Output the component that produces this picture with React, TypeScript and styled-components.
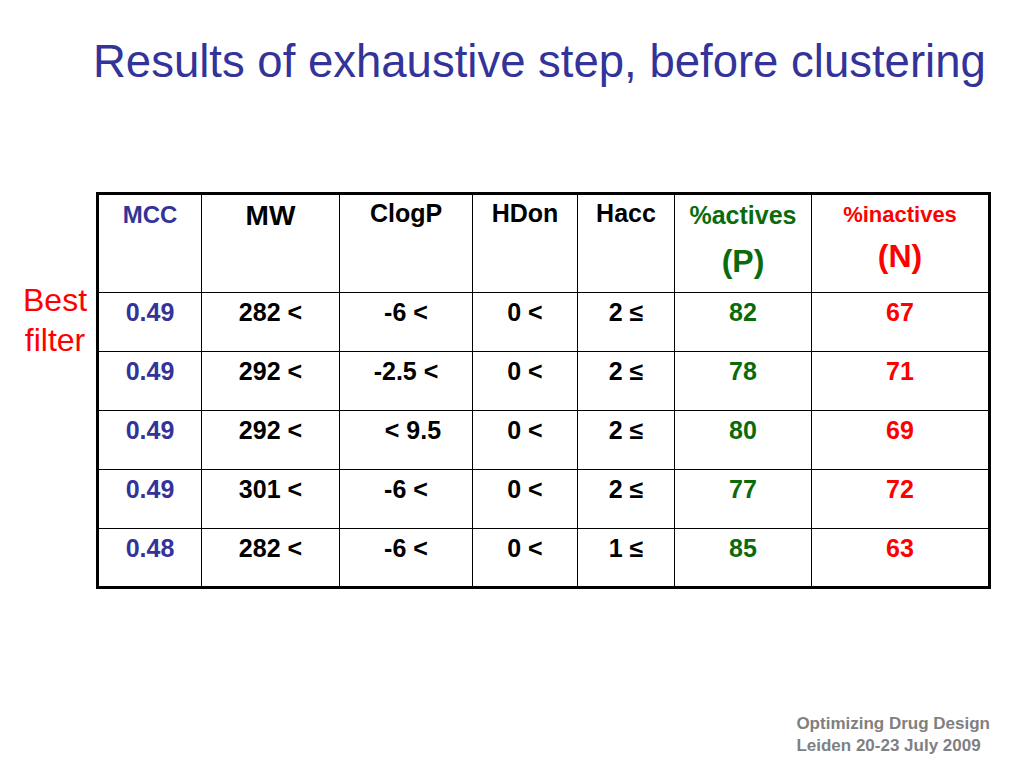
import React from 'react';
import styled, { createGlobalStyle } from 'styled-components';

const BLUE = '#333399';
const GREEN = '#0b6b0b';
const RED = '#ff0000';

const GlobalStyle = createGlobalStyle`
  html, body {
    margin: 0;
    padding: 0;
    background: #ffffff;
  }
  body {
    font-family: 'Liberation Sans', Arial, sans-serif;
  }
`;

const Slide = styled.div`
  width: 1024px;
  height: 768px;
  position: relative;
  background: #ffffff;
  display: flex;
  flex-direction: column;
  overflow: hidden;
`;

const Title = styled.h1`
  margin: 0;
  padding: 39px 0 0 93px;
  font-size: 45.5px;
  font-weight: normal;
  line-height: 45px;
  color: ${BLUE};
  white-space: nowrap;
`;

const Body = styled.div`
  display: flex;
  flex-direction: row;
  margin-top: 108px;
`;

const SideLabel = styled.div`
  width: 96px;
  padding-top: 88px;
  padding-left: 14px;
  box-sizing: border-box;
  text-align: center;
  color: ${RED};
  font-size: 32px;
  line-height: 40px;
`;

const Table = styled.table`
  width: 892px;
  border-collapse: collapse;
  border: 3px solid #000;
  table-layout: fixed;
  th,
  td {
    border: 1px solid #000;
    padding: 0;
    text-align: center;
    vertical-align: top;
    font-weight: bold;
  }
  th {
    height: 99px;
    padding-top: 8px;
    box-sizing: border-box;
  }
  td {
    height: 59px;
    padding-top: 7px;
    box-sizing: border-box;
    font-size: 25px;
    line-height: 25px;
    color: #000;
  }
`;

interface HeadTextProps {
  size: number;
  color?: string;
  lift?: number;
}

const HeadText = styled.div<HeadTextProps>`
  font-size: ${(props) => props.size}px;
  line-height: ${(props) => props.size}px;
  margin-top: ${(props) => props.lift || 0}px;
  color: ${(props) => props.color || '#000'};
`;

const HeadSub = styled.div<HeadTextProps>`
  font-size: ${(props) => props.size}px;
  line-height: ${(props) => props.size}px;
  margin-top: ${(props) => props.lift || 0}px;
  color: ${(props) => props.color || '#000'};
`;

interface CellProps {
  tone?: string;
}

const Cell = styled.td<CellProps>`
  && {
    color: ${(props) => props.tone || '#000'};
  }
`;

const Footer = styled.div`
  position: absolute;
  right: 34px;
  bottom: 11px;
  color: #808080;
  font-size: 17px;
  font-weight: bold;
  line-height: 22px;
`;

const cols = [104, 138, 133, 105, 97, 137, 178];

const rows = [
  ['0.49', '282 <', '-6 <', '0 <', '2 \u2264', '82', '67'],
  ['0.49', '292 <', '-2.5 <', '0 <', '2 \u2264', '78', '71'],
  ['0.49', '292 <', '\u00a0\u00a0< 9.5', '0 <', '2 \u2264', '80', '69'],
  ['0.49', '301 <', '-6 <', '0 <', '2 \u2264', '77', '72'],
  ['0.48', '282 <', '-6 <', '0 <', '1 \u2264', '85', '63'],
];

const tones = [BLUE, '#000', '#000', '#000', '#000', GREEN, RED];

export default function App() {
  return (
    <Slide>
      <GlobalStyle />
      <Title>Results of exhaustive step, before clustering</Title>
      <Body>
        <SideLabel>
          Best
          <br />
          filter
        </SideLabel>
        <Table>
          <colgroup>
            {cols.map((w, i) => (
              <col key={i} style={{ width: w }} />
            ))}
          </colgroup>
          <thead>
            <tr>
              <th>
                <HeadText size={24} color={BLUE} lift={0}>MCC</HeadText>
              </th>
              <th>
                <HeadText size={28} lift={-1}>MW</HeadText>
              </th>
              <th>
                <HeadText size={25} lift={-2}>ClogP</HeadText>
              </th>
              <th>
                <HeadText size={25} lift={-2}>HDon</HeadText>
              </th>
              <th>
                <HeadText size={25} lift={-2}>Hacc</HeadText>
              </th>
              <th>
                <HeadText size={25} color={GREEN} lift={0}>%actives</HeadText>
                <HeadSub size={32} color={GREEN} lift={17}>(P)</HeadSub>
              </th>
              <th>
                <HeadText size={22} color={RED} lift={1}>%inactives</HeadText>
                <HeadSub size={32} color={RED} lift={14}>(N)</HeadSub>
              </th>
            </tr>
          </thead>
          <tbody>
            {rows.map((r, i) => (
              <tr key={i}>
                {r.map((v, j) => (
                  <Cell key={j} tone={tones[j]}>
                    {v}
                  </Cell>
                ))}
              </tr>
            ))}
          </tbody>
        </Table>
      </Body>
      <Footer>
        Optimizing Drug Design
        <br />
        Leiden 20-23 July 2009
      </Footer>
    </Slide>
  );
}
